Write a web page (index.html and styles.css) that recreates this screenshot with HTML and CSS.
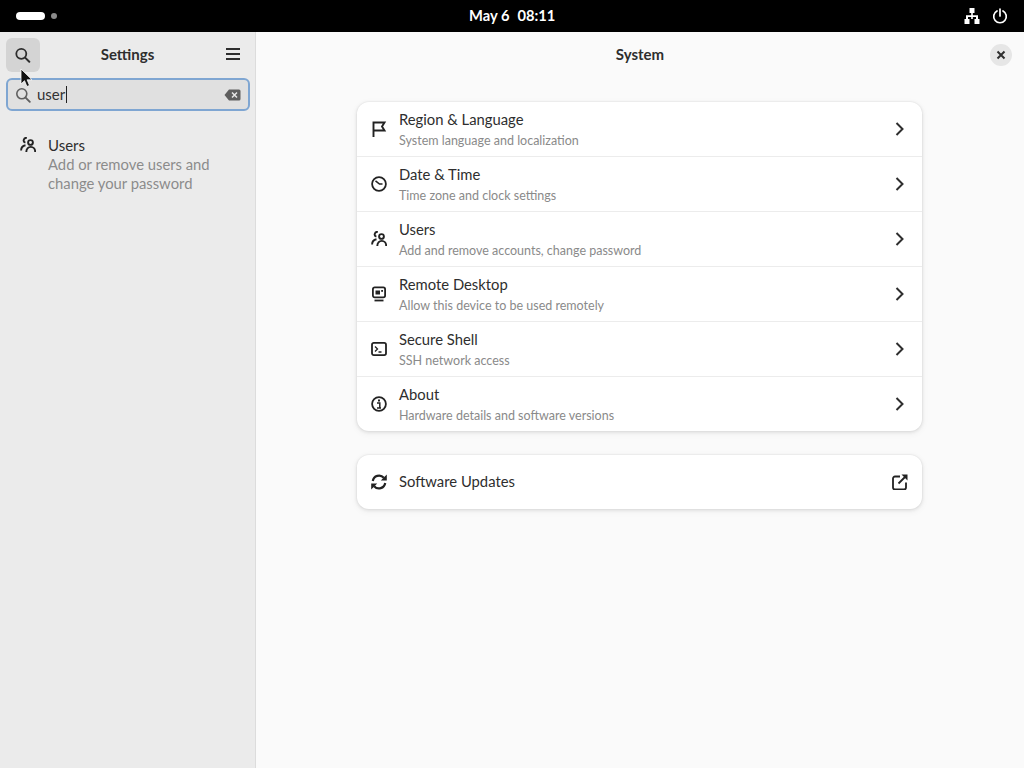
FILE: index.html
```html
<!DOCTYPE html>
<html lang="en">
<head>
<meta charset="utf-8">
<title>Settings</title>
<link rel="stylesheet" href="styles.css">
</head>
<body>
<div class="topbar">
  <div class="workspaces"><span class="ws-active"></span><span class="ws-dot"></span></div>
  <div class="clock"><span>May 6</span><span>08:11</span></div>
  <div class="tray">
    <svg class="tray-net" viewBox="0 0 16 16"><path d="M5.500 0h5v5h-1.700v2.200H14V11h1.500v5h-5v-5H12V9H8.800v2h1.500v0H7.200v-2H4v2h1.500v5h-5v-5H2V7.200h5.200V5H5.500z" fill="#fff"/></svg>
    <svg class="tray-power" viewBox="0 0 16 16"><path d="M5 2.900a6.300 6.300 0 1 0 6 0M8 1v7" fill="none" stroke="#fff" stroke-width="1.700" stroke-linecap="round"/></svg>
  </div>
</div>
<div class="window">
  <aside class="sidebar">
    <div class="side-head">
      <button class="icon-btn active">
        <svg class="ic" viewBox="0.500 0 16 16"><circle cx="6.800" cy="6.800" r="5" fill="none" stroke="#2e2e2e" stroke-width="1.800"/><path d="M10.600 10.600l4.200 4.200" stroke="#2e2e2e" stroke-width="2" stroke-linecap="round"/></svg>
      </button>
      <div class="side-title">Settings</div>
      <button class="icon-btn">
        <svg class="ic" viewBox="0 0 16 16"><path d="M2 3h14M2 8h14M2 13h14" stroke="#2e2e2e" stroke-width="2"/></svg>
      </button>
    </div>
    <div class="search">
      <svg class="ic search-ic" viewBox="0 0 16 16"><circle cx="6.800" cy="6.800" r="5" fill="none" stroke="#5f5f5f" stroke-width="1.600"/><path d="M10.600 10.600l4.200 4.200" stroke="#5f5f5f" stroke-width="1.900" stroke-linecap="round"/></svg>
      <span class="search-text">user</span><span class="caret"></span>
      <svg class="clear-ic" viewBox="0 0 17 12"><path d="M5 0.500h10a1.500 1.500 0 0 1 1.500 1.500v8a1.500 1.500 0 0 1-1.500 1.500H5L0.500 6z" fill="#5e5e5e"/><path d="M8 3.500l5 5M13 3.500l-5 5" stroke="#e6e6e6" stroke-width="1.500"/></svg>
    </div>
    <div class="result">
      <svg class="ic result-ic" viewBox="0 0 16 16"><use href="#users"/></svg>
      <div class="result-text">
        <div class="result-title">Users</div>
        <div class="result-sub">Add or remove users and change your password</div>
      </div>
    </div>
  </aside>
  <main class="content">
    <header class="content-head">
      <div class="content-title">System</div>
      <button class="close-btn">
        <svg viewBox="0 0 10 10" class="close-ic"><path d="M1.500 1.500l7 7M8.500 1.500l-7 7" stroke="#2e2e2e" stroke-width="2"/></svg>
      </button>
    </header>
    <div class="cards">
      <section class="card">
        <div class="row">
          <svg class="ic" viewBox="0 0 16 16"><path d="M2.500 16V1.500h11l-2.500 4 2.500 4h-11" fill="none" stroke="#222" stroke-width="1.900"/></svg>
          <div class="row-text"><div class="row-title">Region &amp; Language</div><div class="row-sub">System language and localization</div></div>
          <svg class="chev" viewBox="0 0 10 14"><path d="M1.500 1l6 6-6 6" fill="none" stroke="#2e2e2e" stroke-width="2"/></svg>
        </div>
        <div class="row">
          <svg class="ic" viewBox="0 0 16 16"><circle cx="8" cy="8" r="6.900" fill="none" stroke="#222" stroke-width="1.800"/><path d="M4.500 4.800L8.500 8H11.500" fill="none" stroke="#222" stroke-width="1.600"/></svg>
          <div class="row-text"><div class="row-title">Date &amp; Time</div><div class="row-sub">Time zone and clock settings</div></div>
          <svg class="chev" viewBox="0 0 10 14"><path d="M1.500 1l6 6-6 6" fill="none" stroke="#2e2e2e" stroke-width="2"/></svg>
        </div>
        <div class="row">
          <svg class="ic" viewBox="0 0 16 16"><use href="#users"/></svg>
          <div class="row-text"><div class="row-title">Users</div><div class="row-sub">Add and remove accounts, change password</div></div>
          <svg class="chev" viewBox="0 0 10 14"><path d="M1.500 1l6 6-6 6" fill="none" stroke="#2e2e2e" stroke-width="2"/></svg>
        </div>
        <div class="row">
          <svg class="ic" viewBox="0 0 16 16"><rect x="1.900" y="1.400" width="12.200" height="10" rx="1.800" fill="none" stroke="#222" stroke-width="1.800"/><rect x="4.500" y="4.500" width="4.500" height="4" fill="#222"/><rect x="10.200" y="4" width="1.800" height="1.800" fill="#222"/><path d="M3.500 14.500h9" stroke="#222" stroke-width="1.800"/></svg>
          <div class="row-text"><div class="row-title">Remote Desktop</div><div class="row-sub">Allow this device to be used remotely</div></div>
          <svg class="chev" viewBox="0 0 10 14"><path d="M1.500 1l6 6-6 6" fill="none" stroke="#2e2e2e" stroke-width="2"/></svg>
        </div>
        <div class="row">
          <svg class="ic" viewBox="0 0 16 16"><rect x="1" y="1.900" width="14" height="12.200" rx="1.800" fill="none" stroke="#222" stroke-width="1.800"/><path d="M4 5.500L6.500 8 4 10.500M7.500 11h3" fill="none" stroke="#222" stroke-width="1.300"/></svg>
          <div class="row-text"><div class="row-title">Secure Shell</div><div class="row-sub">SSH network access</div></div>
          <svg class="chev" viewBox="0 0 10 14"><path d="M1.500 1l6 6-6 6" fill="none" stroke="#2e2e2e" stroke-width="2"/></svg>
        </div>
        <div class="row">
          <svg class="ic" viewBox="0 0 16 16"><circle cx="8" cy="8" r="6.900" fill="none" stroke="#222" stroke-width="1.800"/><rect x="7" y="3.500" width="2" height="2" fill="#222"/><path d="M6 7h2.800v4.500M6 12h4" fill="none" stroke="#222" stroke-width="1.500"/></svg>
          <div class="row-text"><div class="row-title">About</div><div class="row-sub">Hardware details and software versions</div></div>
          <svg class="chev" viewBox="0 0 10 14"><path d="M1.500 1l6 6-6 6" fill="none" stroke="#2e2e2e" stroke-width="2"/></svg>
        </div>
      </section>
      <section class="card">
        <div class="row row-single">
          <svg class="ic" viewBox="0 0 16 16"><path d="M1.800 7A6.300 6.300 0 0 1 12.800 3.800M14.200 9A6.300 6.300 0 0 1 3.200 12.200" fill="none" stroke="#222" stroke-width="2.200"/><path d="M15.800 0.500V6.500H9.800zM0.200 15.500V9.500H6.200z" fill="#222"/></svg>
          <div class="row-text"><div class="row-title">Software Updates</div></div>
          <svg class="ext" viewBox="0 0 16 16"><path d="M8 2.500H3A2 2 0 0 0 1 4.500v9a2 2 0 0 0 2 2h9a2 2 0 0 0 2-2V8.500" fill="none" stroke="#222" stroke-width="1.800"/><path d="M6.500 9.500L14 2" stroke="#222" stroke-width="1.800"/><path d="M9.500 0.500H15.500V6.500z" fill="#222"/></svg>
        </div>
      </section>
    </div>
  </main>
</div>
<svg class="pointer" viewBox="0 0 13 20"><path d="M1 1v15l3.500-3.300 2.400 5.800 2.600-1.100-2.400-5.600H12z" fill="#111" stroke="#fff" stroke-width="0.800"/></svg>
<svg class="defs" aria-hidden="true"><defs><g id="users" fill="none" stroke="#222" stroke-width="1.900"><circle cx="10.500" cy="5.500" r="2.400"/><path d="M6.300 15c0-6.800 8.900-6.800 8.900 0"/><path d="M6.800 1.100A2.300 2.300 0 0 0 5.400 5.700"/><path d="M5.500 8.300C3 8.800 1.100 10.500 1.100 13.500"/></g></defs></svg>
</body>
</html>
```
FILE: styles.css
```css
* { box-sizing: border-box; }
html, body { margin: 0; height: 100%; overflow: hidden; }
body {
  width: 1024px;
  height: 768px;
  display: flex;
  flex-direction: column;
  font-family: "Lato", "Noto Sans", sans-serif;
  color: #2e2e2e;
  background: #fafafa;
  position: relative;
}
button { border: 0; background: none; padding: 0; display: flex; align-items: center; justify-content: center; }
.defs { width: 0; height: 0; position: absolute; }

.topbar {
  height: 32px;
  flex: none;
  background: #000;
  color: #fff;
  display: flex;
  align-items: center;
  justify-content: space-between;
  padding: 0 16px;
  position: relative;
}
.workspaces { display: flex; align-items: center; gap: 6px; }
.ws-active { width: 29px; height: 8px; border-radius: 4px; background: #fff; }
.ws-dot { width: 6px; height: 6px; border-radius: 50%; background: #8a8a8a; }
.clock {
  position: absolute;
  left: 469px;
  top: 6px;
  display: flex;
  gap: 8px;
  font-size: 14.700px;
  line-height: 19px;
  font-weight: 700;
}
.tray { display: flex; align-items: center; gap: 12px; }
.tray-net { width: 16px; height: 16px; }
.tray-power { width: 16px; height: 16px; }

.window { flex: 1; display: flex; min-height: 0; }
.sidebar {
  width: 256px;
  flex: none;
  background: #ebebeb;
  border-right: 1px solid #dcdcdc;
  padding: 6px 6px 0;
}
.side-head { display: flex; align-items: center; justify-content: space-between; height: 34px; padding-bottom: 2px; }
.icon-btn { width: 34px; height: 34px; border-radius: 6px; }
.icon-btn.active { background: #d4d4d4; margin-top: 2px; }
.side-title { font-size: 15px; font-weight: 700; }
.ic { width: 16px; height: 16px; flex: none; display: block; }

.search {
  margin-top: 6px;
  height: 33px;
  width: 244px;
  border: 2px solid #7fa6d2;
  border-radius: 6px;
  background: #e0e0e0;
  display: flex;
  align-items: center;
  padding: 0 7px;
  font-size: 15px;
}
.search-ic { margin-right: 6px; }
.search-text { color: #333; padding-bottom: 2px; }
.caret { width: 1px; height: 17px; background: #222; margin-left: 1px; }
.clear-ic { width: 17px; height: 12px; margin-left: auto; }

.result { display: flex; gap: 12px; padding: 25px 14px 0; }
.result-ic { margin-top: 1px; }
.result-text { width: 180px; }
.result-title { font-size: 15px; line-height: 19px; }
.result-sub { font-size: 14.800px; line-height: 19px; color: #8b8b8b; }

.content { flex: 1; min-width: 0; display: flex; flex-direction: column; }
.content-head {
  height: 46px;
  flex: none;
  display: flex;
  align-items: center;
  justify-content: center;
  padding-bottom: 2px;
  position: relative;
}
.content-title { font-size: 15px; font-weight: 700; }
.close-btn {
  position: absolute;
  right: 12px;
  top: 12px;
  width: 22px;
  height: 22px;
  border-radius: 50%;
  background: #e6e6e6;
}
.close-ic { width: 10px; height: 10px; }

.cards {
  width: 565px;
  margin: 24px 0 0 101px;
  display: flex;
  flex-direction: column;
  gap: 24px;
}
.card {
  background: #fff;
  border-radius: 12px;
  box-shadow: 0 0 0 1px rgba(0,0,0,.02), 0 1px 3px 1px rgba(0,0,0,.07), 0 2px 6px 2px rgba(0,0,0,.03);
}
.row {
  height: 55px;
  display: flex;
  align-items: center;
  padding: 0 14px;
  border-bottom: 1px solid #ececec;
}
.row:last-child { border-bottom: 0; height: 54px; }
.row-text { flex: 1; margin-left: 12px; min-width: 0; }
.row-title { font-size: 14.800px; line-height: 20px; color: #2e2e2e; }
.row-single .row-title { padding-bottom: 2px; }
.row-sub { font-size: 12.500px; line-height: 17px; margin-top: 3px; color: #8a8a8a; }
.chev { width: 10px; height: 14px; margin-right: 3px; }
.ext { width: 16px; height: 16px; margin-right: 0; }
.pointer { position: absolute; left: 20px; top: 68px; width: 13px; height: 20px; }
```
